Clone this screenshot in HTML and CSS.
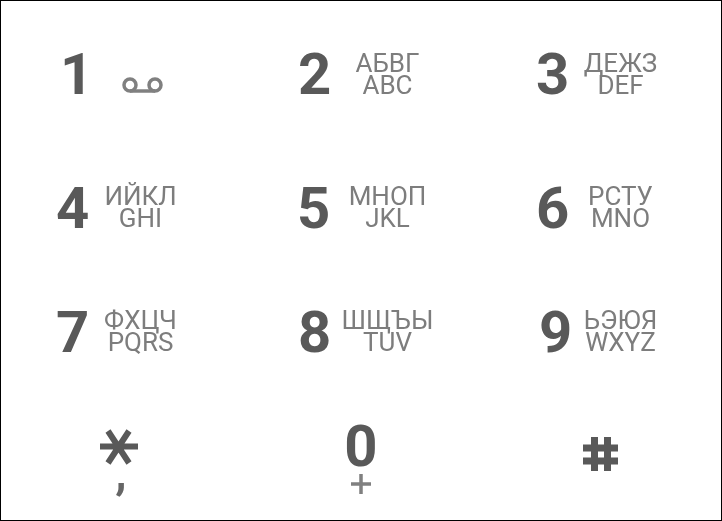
FILE: index.html
```html
<!DOCTYPE html>
<html lang="ru">
<head>
    <meta charset="UTF-8">
    <meta name="viewport" content="width=device-width, initial-scale=1.0">
    <title>Dialpad</title>
    <link rel="stylesheet" href="styles.css">
</head>
<body>

    <div class="dialpad">
        <div class="row row-1">
            <div class="key">
                <span class="digit shift-4">1</span>
                <svg class="voicemail" width="41" height="16" viewBox="0 0 41 16">
                    <circle cx="8" cy="8" r="6" fill="none" stroke="#808080" stroke-width="3.500"/>
                    <circle cx="33" cy="8" r="6" fill="none" stroke="#808080" stroke-width="3.500"/>
                    <path d="M8 14H33" fill="none" stroke="#808080" stroke-width="3.500"/>
                </svg>
            </div>
            <div class="key key-mid">
                <span class="digit shift-2">2</span>
                <span class="label"><span class="line">АБВГ</span><span class="line">ABC</span></span>
            </div>
            <div class="key">
                <span class="digit">3</span>
                <span class="label"><span class="line">ДЕЖЗ</span><span class="line">DEF</span></span>
            </div>
        </div>
        <div class="row row-2">
            <div class="key">
                <span class="digit">4</span>
                <span class="label"><span class="line">ИЙКЛ</span><span class="line">GHI</span></span>
            </div>
            <div class="key key-mid">
                <span class="digit shift-1">5</span>
                <span class="label"><span class="line">МНОП</span><span class="line">JKL</span></span>
            </div>
            <div class="key">
                <span class="digit">6</span>
                <span class="label"><span class="line">РСТУ</span><span class="line">MNO</span></span>
            </div>
        </div>
        <div class="row row-3">
            <div class="key">
                <span class="digit">7</span>
                <span class="label"><span class="line">ФХЦЧ</span><span class="line">PQRS</span></span>
            </div>
            <div class="key key-mid">
                <span class="digit shift-2">8</span>
                <span class="label"><span class="line">ШЩЪЫ</span><span class="line">TUV</span></span>
            </div>
            <div class="key">
                <span class="digit shift-3">9</span>
                <span class="label"><span class="line">ЬЭЮЯ</span><span class="line">WXYZ</span></span>
            </div>
        </div>
        <div class="row row-4">
            <div class="stack">
                <svg class="star" width="38" height="36" viewBox="0 0 38 36">
                    <path d="M0 17.500H38M8 2L29 34M29 2L8 34" fill="none" stroke="#595959" stroke-width="6"/>
                </svg>
                <span class="comma">,</span>
            </div>
            <div class="stack">
                <span class="digit digit-zero">0</span>
                <svg class="plus" width="20" height="20" viewBox="0 0 20 20">
                    <path d="M0 10H20M10 0V20" fill="none" stroke="#808080" stroke-width="3.500"/>
                </svg>
            </div>
            <div class="stack">
                <svg class="hash" width="35" height="34" viewBox="0 0 35 34">
                    <path d="M0 11H35M0 24H35M11.500 0V34M24.500 0V34" fill="none" stroke="#595959" stroke-width="7"/>
                </svg>
            </div>
        </div>
    </div>

</body>
</html>
```

FILE: styles.css
```css
html, body {
    margin: 0;
    padding: 0;
    background: #fff;
}

.dialpad {
    box-sizing: border-box;
    width: 722px;
    height: 521px;
    border: 1px solid #000;
    font-family: Roboto, sans-serif;
    color: #595959;
}

.row {
    display: grid;
    grid-template-columns: 240px 240px 240px;
    filter: blur(0.35px);
}

.row-1 {
    margin-top: 11px;
}

.row-2 {
    margin-top: 10px;
}

.row-2 .label,
.row-3 .label {
    margin-top: -2px;
}

.key {
    display: flex;
    align-items: center;
    height: 124px;
    padding-left: 55px;
}

.key-mid .label {
    margin-left: 7px;
}

.digit {
    box-sizing: border-box;
    width: 33px;
    font-size: 58px;
    font-weight: 700;
    line-height: 68px;
}

.shift-1 { padding-left: 1px; }
.shift-2 { padding-left: 2px; }
.shift-3 { padding-left: 3px; }
.shift-4 { padding-left: 4px; }

.label {
    width: 103px;
    text-align: center;
    font-size: 26px;
    font-weight: 400;
    color: #7d7d7d;
}

.line {
    display: block;
    height: 22px;
    line-height: 22px;
}

.voicemail {
    margin: 22px 0 0 33px;
}

.stack {
    display: flex;
    flex-direction: column;
    align-items: center;
}

.digit-zero {
    width: auto;
    margin-top: 18px;
}

.plus {
    margin-top: -6px;
}

.star {
    margin-top: 35px;
    margin-right: 5px;
}

.comma {
    margin-top: -12px;
    font-size: 46px;
    font-weight: 700;
    line-height: 40px;
    color: #666;
}

.hash {
    margin-top: 43px;
    margin-left: -1px;
}
```
